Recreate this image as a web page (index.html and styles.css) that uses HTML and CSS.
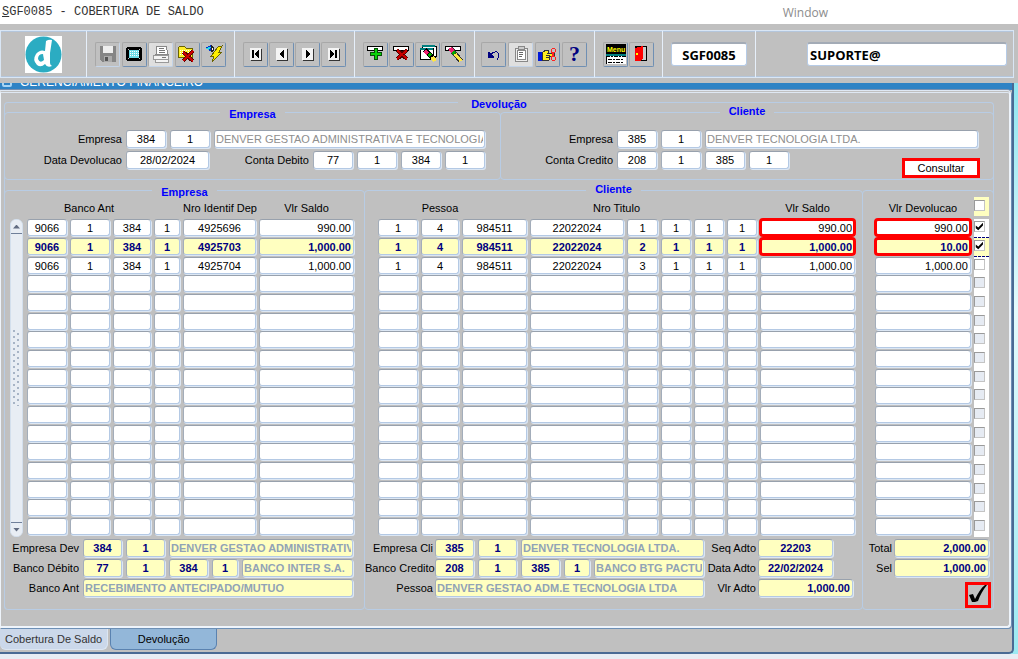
FILE: index.html
```html
<!DOCTYPE html>
<html lang="pt-BR">

<head>
  <meta charset="UTF-8">
  <meta name="viewport" content="width=device-width, initial-scale=1.0">
  <title>SGF0085 - Cobertura de Saldo</title>
  <link rel="stylesheet" href="styles.css">
</head>

<body>
  <header class="menubar">
    <span class="menu-title"><u>S</u>GF0085 - COBERTURA DE SALDO</span>
    <span class="menu-window">Window</span>
  </header>

  <div class="toolbar">
    <div class="tool-frame">
      <div class="group group-logo">
        <svg class="logo" viewBox="0 0 37 37" role="img" aria-label="Logo">
          <rect width="37" height="37" fill="#fff" />
          <circle cx="18.500" cy="18.500" r="18" fill="#2bacc2" />
          <path d="M21 5Q24 3 27 4L25 17V27Q25 29 27 30Q22 32 20 28Q16 32 12 29Q7 24 11 18Q15 13 20 15Z" fill="#fff" />
          <path d="M18 18Q13 18 13 23Q15 28 19 24Z" fill="#2bacc2" />
        </svg>
      </div>
      <div class="group group-file">
        <button class="tool off" aria-label="Salvar"><svg viewBox="0 0 20 20"><path d="M2 2h16v16H4l-2-2z" fill="#858585" /><path d="M5 2h10v7H5z" fill="#eee" /><path d="M6 12h8v6H6z" fill="#aaa" /><path d="M7 13h3v4H7z" fill="#555" /></svg></button>
        <button class="tool" aria-label="Tela"><svg viewBox="0 0 20 20"><path d="M3 3h14v1h1v12h-1v1H3v-1H2V4h1z" fill="#000" /><path d="M4 5h12v10H4z" fill="#c0c0c0" /><path d="M5 5h10v1h1v8h-1v1H5v-1H4V6h1z" fill="#000" /><path d="M5 6h10v8H5z" fill="#6fdde8" /><path d="M6 7.500h9M6 9.500h9M6 11.500h9" stroke="#fff" stroke-dasharray="1 1" /></svg></button>
        <button class="tool off light" aria-label="Imprimir"><svg viewBox="0 0 20 20"><path d="M1 1h18v18H1z" fill="#ddd" /><path d="M6 2h9l2 8H5z" fill="#fff" stroke="#888" /><path d="M8 4h5M8 6h6M8 8h6" stroke="#777" /><path d="M2 11h15v4H2zM4 15h13v3H4z" fill="#f4f4f4" stroke="#999" /><path d="M11 13h4" stroke="#777" /></svg></button>
        <button class="tool" aria-label="Fechar"><svg viewBox="0 0 20 20"><path d="M1 4l2-2h4l2 2h6v9H1z" fill="#ffee2b" stroke="#6a6300" /><path d="M3 6h11M3 8h11M3 10h5" stroke="#fff" stroke-dasharray="1 1" /><path d="M6 8l10 9M16 7L6 17" stroke="#500" stroke-width="4" /><path d="M6 8l10 9M16 7L6 17" stroke="#c00" stroke-width="2" /></svg></button>
        <button class="tool" aria-label="Executar consulta"><svg viewBox="0 0 20 20"><path d="M1 4l6-3 1 7z" fill="#0030d0" /><path d="M1 4l6-1-2 3z" fill="#28dbe5" /><path d="M7 1l3 4-2 3z" fill="#fff" stroke="#222" /><path d="M14 3l4-1-3 6h3L8 18l2-6H7z" fill="#ffee00" stroke="#6a6300" /></svg></button>
      </div>
      <div class="group group-nav">
        <button class="tool" aria-label="Primeiro"><svg viewBox="0 0 20 20"><path d="M5 5h11v12H5z" fill="#333" /><path d="M4 4h11v12H4z" fill="#f4f4f4" /><path d="M6 6h2v8H6zM13 6v8l-5-4z" fill="#000" /></svg></button>
        <button class="tool" aria-label="Anterior"><svg viewBox="0 0 20 20"><path d="M5 5h11v12H5z" fill="#333" /><path d="M4 4h11v12H4z" fill="#f4f4f4" /><path d="M12 6v8l-5-4z" fill="#000" /></svg></button>
        <button class="tool" aria-label="Próximo"><svg viewBox="0 0 20 20"><path d="M5 5h11v12H5z" fill="#333" /><path d="M4 4h11v12H4z" fill="#f4f4f4" /><path d="M8 6v8l5-4z" fill="#000" /></svg></button>
        <button class="tool" aria-label="Último"><svg viewBox="0 0 20 20"><path d="M5 5h11v12H5z" fill="#333" /><path d="M4 4h11v12H4z" fill="#f4f4f4" /><path d="M6 6v8l5-4zM11 6h2v8h-2z" fill="#000" /></svg></button>
      </div>
      <div class="group group-record">
        <button class="tool" aria-label="Inserir"><svg viewBox="0 0 20 20"><path d="M1 2h16v5H1z" fill="#000" /><path d="M2 3h14v3H2z" fill="#fff" /><path d="M8 4h4v4h4v4h-4v4H8v-4H4V8h4z" fill="#064d06" /><path d="M9 5h2v4h4v2h-4v4H9v-4H5V9h4z" fill="#0ad20a" /></svg></button>
        <button class="tool" aria-label="Excluir"><svg viewBox="0 0 20 20"><path d="M1 2h16v5H1z" fill="#000" /><path d="M2 3h14v3H2z" fill="#fff" /><path d="M5 6l10 9M15 6L5 15" stroke="#500" stroke-width="4" /><path d="M5 6l10 9M15 6L5 15" stroke="#c80000" stroke-width="2" /></svg></button>
        <button class="tool" aria-label="Limpar tela"><svg viewBox="0 0 20 20"><path d="M4 2h14v10H4z" fill="#fff" stroke="#000" /><path d="M2 4h13v11H2z" fill="#fff" stroke="#000" /><path d="M4 2h13M2 5h13" stroke="#007f7f" stroke-width="2" /><path d="M7 6l10 10" stroke="#000" stroke-width="5" /><path d="M7 7l3 3" stroke="#f02070" stroke-width="4" /><path d="M11 10l2 2" stroke="#0a0" stroke-width="4" /><path d="M14 13l3 4" stroke="#ffe840" stroke-width="4" /></svg></button>
        <button class="tool" aria-label="Limpar registro"><svg viewBox="0 0 20 20"><path d="M1 2h16v5H1z" fill="#000" /><path d="M2 3h14v3H2z" fill="#fff" /><path d="M6 4l11 13" stroke="#333" stroke-width="5" /><path d="M6 4l3 4" stroke="#f02070" stroke-width="4" /><path d="M9 8l2 2" stroke="#0a0" stroke-width="4" /><path d="M11 10l6 7" stroke="#ffe840" stroke-width="3" /></svg></button>
      </div>
      <div class="group group-edit">
        <button class="tool" aria-label="Desfazer"><svg viewBox="0 0 20 20"><path d="M4 8v6h6v-1L5 8z" fill="#000080" /><path d="M6 12Q9 7 13 8Q17 10 13 16" fill="none" stroke="#000080" /></svg></button>
        <button class="tool off light" aria-label="Lista"><svg viewBox="0 0 20 20"><path d="M4 4h12v13H4z" fill="#eee" stroke="#888" /><path d="M7 2h6v3H7z" fill="#ccc" stroke="#888" /><path d="M6 6h8v9H6z" fill="#fff" stroke="#888" /><path d="M8 8h4M8 10h4M8 12h3" stroke="#666" /></svg></button>
        <button class="tool" aria-label="Recortar"><svg viewBox="0 0 20 20"><path d="M0 8h4v9H0z" fill="#0018d8" /><path d="M4 9l4-3h3l-1 3h6v3h-4l-1 4H4z" fill="#ffee20" stroke="#333" /><path d="M8 11h4M8 13h4" stroke="#333" /><circle cx="15.500" cy="6.500" r="2" fill="none" stroke="#f22" /><circle cx="15.500" cy="14.500" r="2" fill="none" stroke="#f22" /><path d="M13 8l4 5M13 13l4-5" stroke="#f22" /></svg></button>
        <button class="tool help" aria-label="Ajuda">?</button>
      </div>
      <div class="group group-menu">
        <button class="tool" aria-label="Menu"><svg viewBox="0 0 20 20"><path d="M0 0h20v10H0z" fill="#000" /><text x="1" y="8" class="menu-glyph">Menu</text><path d="M0 10h20v2H0z" fill="#008080" /><path d="M0 12h20v8H0z" fill="#fff" /><path d="M0 12h20M2 15h16M2 18h16" stroke="#000" stroke-dasharray="4 1 2 1" /><path d="M.500 12v8" stroke="#000" /></svg></button>
        <button class="tool" aria-label="Sair"><svg viewBox="0 0 20 20"><path d="M3 2h12v15H3z" fill="#000" /><path d="M10 3h4v13h-4z" fill="#ccc" /><path d="M3 4l8-2v13l-3 2H3z" fill="#f00" /><path d="M4 9h2v2H4z" fill="#ff0" /></svg></button>
      </div>
      <div class="group group-code"><input class="info" aria-label="Programa" value="SGF0085" readonly></div>
      <div class="group group-user"><input class="info" aria-label="Usuário" value="SUPORTE@" readonly></div>
    </div>
  </div>

  <div class="desktop">
    <main class="window">
      <div class="window-title">
        <span class="window-icon"></span>
        <span>GERENCIAMENTO FINANCEIRO</span>
      </div>

      <div class="canvas">
        <fieldset class="panel outer">
          <legend>Devolução</legend>

          <div class="filters">
            <fieldset class="panel filter">
              <legend>Empresa</legend>
              <div class="line">
                <label class="lbl" for="emp">Empresa</label>
                <input class="fld w40" id="emp" value="384">
                <input class="fld w40" aria-label="Filial" value="1">
                <input class="fld name" aria-label="Nome da empresa" value="DENVER GESTAO ADMINISTRATIVA E TECNOLOGIA LTDA" disabled>
              </div>
              <div class="line">
                <label class="lbl" for="data">Data Devolucao</label>
                <input class="fld w83" id="data" value="28/02/2024">
                <label class="lbl grow" for="debito">Conta Debito</label>
                <input class="fld w40" id="debito" value="77">
                <input class="fld w40" aria-label="Conta debito 2" value="1">
                <input class="fld w40" aria-label="Conta debito 3" value="384">
                <input class="fld w40" aria-label="Conta debito 4" value="1">
              </div>
            </fieldset>
            <fieldset class="panel filter credit">
              <legend class="high">Cliente</legend>
              <div class="line">
                <label class="lbl" for="cli">Empresa</label>
                <input class="fld w40" id="cli" value="385">
                <input class="fld w40" aria-label="Filial cliente" value="1">
                <input class="fld name" aria-label="Nome do cliente" value="DENVER TECNOLOGIA LTDA." disabled>
              </div>
              <div class="line">
                <label class="lbl" for="credito">Conta Credito</label>
                <input class="fld w40" id="credito" value="208">
                <input class="fld w40" aria-label="Conta credito 2" value="1">
                <input class="fld w40" aria-label="Conta credito 3" value="385">
                <input class="fld w40" aria-label="Conta credito 4" value="1">
                <button class="query">Consultar</button>
              </div>
            </fieldset>
          </div>

          <div class="details">
            <fieldset class="panel detail empresa">
              <legend>Empresa</legend>
              <div class="grid-area">
                <div class="scroll">
                  <button class="arrow up" aria-label="Subir"></button>
                  <div class="track"><span class="grip"></span></div>
                  <button class="arrow down" aria-label="Descer"></button>
                </div>
                <table>
                  <colgroup>
                    <col class="c43"><col class="c43"><col class="c41"><col class="c29"><col class="c76"><col class="c98">
                  </colgroup>
                  <thead>
                    <tr><th colspan="3">Banco Ant</th><th></th><th>Nro Identif Dep</th><th>Vlr Saldo</th></tr>
                  </thead>
                  <tbody id="empresaRows"></tbody>
                </table>
              </div>
              <div class="totals">
                <div class="line">
                  <label class="lbl" for="empDev">Empresa Dev</label>
                  <input class="fld key w39" id="empDev" value="384">
                  <input class="fld key w39" aria-label="Filial dev" value="1">
                  <input class="fld key name" aria-label="Nome empresa dev" value="DENVER GESTAO ADMINISTRATIVA E TECNOLOGIA" disabled>
                </div>
                <div class="line">
                  <label class="lbl" for="bcoDeb">Banco Débito</label>
                  <input class="fld key w39" id="bcoDeb" value="77">
                  <input class="fld key w39" aria-label="Banco débito 2" value="1">
                  <input class="fld key w39" aria-label="Banco débito 3" value="384">
                  <input class="fld key w26" aria-label="Banco débito 4" value="1">
                  <input class="fld key name" aria-label="Nome banco débito" value="BANCO INTER S.A." disabled>
                </div>
                <div class="line">
                  <label class="lbl" for="bcoAnt">Banco Ant</label>
                  <input class="fld key name" id="bcoAnt" value="RECEBIMENTO ANTECIPADO/MUTUO" disabled>
                </div>
              </div>
            </fieldset>

            <fieldset class="panel detail cliente">
              <legend class="high">Cliente</legend>
              <div class="grid-area">
                <table>
                  <colgroup>
                    <col class="c43"><col class="c41"><col class="c68"><col class="c97"><col class="c34"><col class="c33"><col class="c33"><col class="c33"><col class="c98">
                  </colgroup>
                  <thead>
                    <tr><th></th><th>Pessoa</th><th></th><th colspan="3" class="titulo">Nro Titulo</th><th></th><th></th><th>Vlr Saldo</th></tr>
                  </thead>
                  <tbody id="clienteRows"></tbody>
                </table>
              </div>
              <div class="totals split">
                <div class="names">
                  <div class="line">
                    <label class="lbl" for="empCli">Empresa Cli</label>
                    <input class="fld key w39" id="empCli" value="385">
                    <input class="fld key w39" aria-label="Filial cli" value="1">
                    <input class="fld key name" aria-label="Nome empresa cli" value="DENVER TECNOLOGIA LTDA." disabled>
                  </div>
                  <div class="line">
                    <label class="lbl" for="bcoCre">Banco Credito</label>
                    <input class="fld key w39" id="bcoCre" value="208">
                    <input class="fld key w39" aria-label="Banco credito 2" value="1">
                    <input class="fld key w39" aria-label="Banco credito 3" value="385">
                    <input class="fld key w26" aria-label="Banco credito 4" value="1">
                    <input class="fld key name" aria-label="Nome banco credito" value="BANCO BTG PACTUAL" disabled>
                  </div>
                  <div class="line">
                    <label class="lbl" for="pessoa">Pessoa</label>
                    <input class="fld key name" id="pessoa" value="DENVER GESTAO ADM.E TECNOLOGIA LTDA" disabled>
                  </div>
                </div>
                <div class="adto">
                  <div class="line"><label class="lbl" for="seq">Seq Adto</label><input class="fld key w75" id="seq" value="22203"></div>
                  <div class="line"><label class="lbl" for="dtAdto">Data Adto</label><input class="fld key w75" id="dtAdto" value="22/02/2024"></div>
                  <div class="line"><label class="lbl" for="vlrAdto">Vlr Adto</label><input class="fld key w95 num" id="vlrAdto" value="1,000.00"></div>
                </div>
              </div>
            </fieldset>

            <section class="panel detail devolucao">
              <div class="grid-area">
                <table>
                  <colgroup>
                    <col class="c98"><col class="c15">
                  </colgroup>
                  <thead>
                    <tr><th>Vlr Devolucao</th><th class="pick all"><input type="checkbox" aria-label="Selecionar todos"></th></tr>
                  </thead>
                  <tbody id="devolucaoRows"></tbody>
                </table>
              </div>
              <div class="totals">
                <div class="line"><label class="lbl" for="total">Total</label><input class="fld key w95 num" id="total" value="2,000.00"></div>
                <div class="line"><label class="lbl" for="sel">Sel</label><input class="fld key w95 num" id="sel" value="1,000.00"></div>
                <button class="confirm" aria-label="Confirmar">
                  <svg viewBox="0 0 20 20"><path d="M1 10l4-1 2 5C10 8 13 3 17 0h2C15 5 12 10 10 16L7 17H4z" fill="#000" /></svg>
                </button>
              </div>
            </section>
          </div>
        </fieldset>
      </div>

      <nav class="tabs">
        <button class="tab">Cobertura De Saldo</button>
        <button class="tab active">Devolução</button>
      </nav>
    </main>
  </div>
  <footer class="status"></footer>

  <script>
    const ROW_COUNT = 17;
    const CURRENT = 1;

    const empresa = [
      ['9066', '1', '384', '1', '4925696', '990.00'],
      ['9066', '1', '384', '1', '4925703', '1,000.00'],
      ['9066', '1', '384', '1', '4925704', '1,000.00']
    ];
    const cliente = [
      ['1', '4', '984511', '22022024', '1', '1', '1', '1', '990.00'],
      ['1', '4', '984511', '22022024', '2', '1', '1', '1', '1,000.00'],
      ['1', '4', '984511', '22022024', '3', '1', '1', '1', '1,000.00']
    ];
    const devolucao = [['990.00'], ['10.00'], ['1,000.00']];

    function fillRows(id, data, columns, marked) {
      const body = document.getElementById(id);
      for (let i = 0; i < ROW_COUNT; i++) {
        const row = body.insertRow(-1);
        if (i === CURRENT) row.className = 'current';
        for (let j = 0; j < columns; j++) {
          const input = document.createElement('input');
          input.className = 'fld';
          input.setAttribute('aria-label', 'Linha ' + (i + 1) + ', coluna ' + (j + 1));
          if (j === columns - 1) {
            input.classList.add('num');
            if (marked && i < 2) input.classList.add('marked');
          }
          input.value = data[i] ? data[i][j] : '';
          row.insertCell(-1).appendChild(input);
        }
      }
    }

    fillRows('empresaRows', empresa, 6, false);
    fillRows('clienteRows', cliente, 9, true);
    fillRows('devolucaoRows', devolucao, 1, true);

    // selection box at the end of each devolucao row
    Array.from(document.getElementById('devolucaoRows').rows).forEach((row, i) => {
      const cell = row.insertCell(-1);
      const box = document.createElement('input');
      cell.className = i < 2 ? 'pick picked' : 'pick';
      box.type = 'checkbox';
      box.checked = i < 2;
      box.disabled = i >= devolucao.length;
      box.setAttribute('aria-label', 'Selecionar linha ' + (i + 1));
      cell.appendChild(box);
    });
  </script>
</body>

</html>
```
FILE: styles.css
```css
* {
  box-sizing: border-box;
}

body {
  margin: 0;
  background-color: #e8edf4;
  font-family: "Liberation Sans", Arial, sans-serif;
  font-size: 11px;
  color: #000;
}

input,
button {
  font-family: inherit;
  font-size: inherit;
  color: inherit;
}

.menubar {
  display: flex;
  justify-content: space-between;
  align-items: center;
  height: 24px;
  padding: 0 190px 0 2px;
  background-color: #fff;
}

.menu-title {
  font-family: "Liberation Mono", monospace;
  font-size: 12px;
  color: #333;
}

.menu-window {
  font-family: "Open Sans", sans-serif;
  font-size: 12px;
  color: #8c8c8c;
}

/* toolbar */
.toolbar {
  padding: 6px 4px 5px 0;
  background-color: #c0c0c0;
}

.tool-frame {
  display: flex;
  height: 48px;
  border: 1px solid #d9e6f5;
  box-shadow: inset 0 1px 0 #b4c6dc, inset 0 -1px 0 #b4c6dc;
}

.group {
  display: flex;
  justify-content: space-between;
  align-items: center;
  flex: none;
  padding: 0 8px;
  border-right: 1px solid #e6effa;
}

.group-logo {
  width: 86px;
  justify-content: center;
}

.group-file {
  width: 148px;
}

.group-nav,
.group-record,
.group-edit {
  width: 120px;
}

.group-edit {
  padding: 0 7px 0 6px;
}

.group-menu {
  width: 68px;
}

.group-code {
  width: 93px;
}

.group-user {
  flex: 1;
  padding: 0 6px 0 51px;
  border-right: none;
}

.logo {
  width: 37px;
  height: 37px;
}

.tool {
  width: 25px;
  height: 25px;
  padding: 0;
  border: 1px solid #a8a8a8;
  border-right-color: #6f8fb3;
  border-bottom-color: #6f8fb3;
  border-radius: 2px;
  background-color: #c0c0c0;
}

.tool.off {
  border-right-color: #c4d4e8;
  border-bottom-color: #c4d4e8;
}

.tool.light {
  background-color: #dfdfdf;
}

.tool svg {
  display: block;
  width: 20px;
  height: 20px;
  margin: 0 auto;
  shape-rendering: crispEdges;
}

.menu-glyph {
  font: bold 7px "Liberation Sans", sans-serif;
  fill: #ffff00;
}

.tool.help {
  font: bold 22px/22px "Liberation Serif", serif;
  color: #000080;
}

.info {
  width: 100%;
  height: 24px;
  padding: 0 0 0 2px;
  border: 1px solid #b6cbe6;
  border-top: 2px solid #a3abb6;
  border-radius: 3px;
  background-color: #fff;
  font-family: "Open Sans", sans-serif;
  font-size: 13px;
  font-weight: bold;
}

.group-code .info {
  padding: 0;
  text-align: center;
}

/* window */
.desktop {
  padding-right: 4px;
  background: linear-gradient(#8fe5f0, #e4fbfd 40%, #9be9f2);
}

.window {
  border-right: 2px solid #4a6a94;
  border-bottom: 2px solid #4a6a94;
  border-bottom-right-radius: 5px;
  background-color: #c0c0c0;
}

.window-title {
  display: flex;
  align-items: flex-end;
  gap: 8px;
  height: 7px;
  padding: 0 0 3px 2px;
  overflow: hidden;
  background-color: #2f83c5;
  color: #fff;
  font-size: 12px;
  line-height: 9px;
}

.window-icon {
  width: 10px;
  height: 10px;
  border: 2px solid #a8d4f4;
  border-radius: 2px;
}

.canvas {
  margin-right: 1px;
  padding: 4px 15px 16px 3px;
  border: 2px solid #eef4fb;
  border-left-width: 1px;
  border-top: 3px double #dfe8f3;
  border-top-right-radius: 4px;
  border-bottom-right-radius: 4px;
  box-shadow: 0 -1px 0 #7890b0, 1px 1px 0 #6d8fb5;
}

.panel {
  min-width: 0;
  margin: 0;
  padding: 0;
  border: 1px solid #b8cce4;
  border-radius: 4px;
}

legend {
  height: 10px;
  margin: 0 auto;
  padding: 0 9px;
  color: #0000ff;
  font-weight: bold;
  line-height: 14px;
}

legend.high {
  line-height: 8px;
}

.outer {
  border-bottom: none;
}

.outer > legend {
  padding: 0 13px;
}

.filters {
  display: grid;
  grid-template-columns: 497fr 493fr;
  margin: 0 -1px;
}

.filter {
  padding: 13px 0 10px;
}

.filter .line {
  padding-right: 15px;
}

.filter + .filter {
  margin-left: -1px;
}

.line {
  display: flex;
  align-items: center;
  gap: 4px;
}

.line + .line {
  margin-top: 3px;
}

.lbl {
  flex: none;
  text-align: right;
  white-space: nowrap;
}

.filter .lbl {
  width: 117px;
}

.credit .lbl {
  width: 112px;
}

.filter .lbl.grow {
  flex: 1;
  width: auto;
}

.fld {
  display: block;
  flex: none;
  height: 18px;
  min-width: 0;
  padding: 0 2px;
  border: 1px solid #b4c9e4;
  border-top-color: #98a1ad;
  border-left-color: #a3adba;
  border-radius: 3px;
  background-color: #fff;
  box-shadow: 1px 1px 0 #dce7f4;
  text-align: center;
}

.fld.name {
  flex: 1;
  padding: 0 1px;
  text-align: left;
}

.fld:disabled {
  color: #8e8e8e;
}

.fld.num {
  text-align: right;
}

.fld.key,
.current .fld {
  background-color: #ffffc0;
  color: #000080;
  font-weight: bold;
}

.fld.key:disabled {
  color: #91a3b6;
}

.w26 { width: 26px; }
.w39 { width: 39px; }
.w40 { width: 40px; }
.w75 { width: 75px; }
.w83 { width: 83px; }
.w95 { width: 95px; }

.query {
  width: 78px;
  height: 20px;
  margin: 7px -2px -9px auto;
  padding: 0;
  border: 3px solid #ff0000;
  background-color: #fff;
  line-height: 12px;
}

/* detail grids */
.details {
  display: grid;
  grid-template-columns: 361fr 498fr 131fr;
  margin: 5px -1px 0;
}

.detail {
  padding-bottom: 12px;
}

.empresa .grid-area {
  padding: 0 8px 0 5px;
}

.cliente {
  margin-left: -1px;
}

.cliente .grid-area {
  padding: 0 6px 0 13px;
}

.devolucao {
  margin: 5px 0 0 -1px;
  padding: 4px 4px 0 12px;
}

.grid-area {
  display: flex;
  align-items: flex-end;
  gap: 4px;
}

table {
  flex: 1;
  width: 100%;
  border-spacing: 0;
  table-layout: fixed;
}

.c15 { width: 15px; }
.c29 { width: 29px; }
.c33 { width: 33px; }
.c34 { width: 34px; }
.c41 { width: 41px; }
.c43 { width: 43px; }
.c68 { width: 68px; }
.c76 { width: 76px; }
.c97 { width: 97px; }
.c98 { width: 98px; }

th {
  height: 24px;
  padding: 2px 3px 0 0;
  font-weight: normal;
  white-space: nowrap;
}

th.titulo {
  padding-left: 12px;
}

td {
  height: 19px;
  padding: 0 3px 0 0;
  vertical-align: top;
}

tr:nth-child(3n) td {
  height: 18px;
}

td .fld {
  width: 100%;
  height: 17px;
}

.fld.marked {
  outline: 3px solid #ff0000;
  outline-offset: -2px;
}

.pick {
  padding: 2px 0 0;
  background-color: #fff;
  text-align: left;
}

.pick.all,
.current .pick {
  background-color: #ffffc0;
}

.pick.all {
  padding: 0 0 2px;
  border-top: 2px solid transparent;
  border-bottom: 3px solid transparent;
  background-clip: padding-box;
}

.pick.picked {
  border-bottom: 1px dashed #000080;
}

.pick input {
  display: block;
  appearance: none;
  width: 11px;
  height: 11px;
  margin: 0;
  border: 1px solid #c4c4c4;
  border-top-color: #9a9a9a;
  border-left-color: #9a9a9a;
  background-color: #fff;
}

.pick input:disabled {
  background-color: #e6ebf3;
}

.pick input:checked::before {
  content: "";
  display: block;
  height: 9px;
  background-color: #000;
  clip-path: polygon(10% 40%, 38% 62%, 90% 8%, 90% 38%, 38% 92%, 10% 70%);
}

.scroll {
  display: flex;
  flex-direction: column;
  flex: none;
  width: 13px;
  height: 318px;
  border: 1px solid #d3dfed;
  border-radius: 6px;
  background-color: #e8edf4;
  overflow: hidden;
}

.arrow {
  height: 14px;
  padding: 0;
  border: none;
  background-color: #e8edf4;
}

.arrow.up {
  border-bottom: 1px solid #6f7f9a;
}

.arrow.down {
  border-top: 1px solid #6f7f9a;
}

.arrow::before {
  content: "";
  display: block;
  width: 7px;
  height: 4px;
  margin: 0 auto;
  background-color: #626c82;
  clip-path: polygon(50% 0, 100% 100%, 0 100%);
}

.arrow.down::before {
  clip-path: polygon(0 0, 100% 0, 50% 100%);
}

.track {
  display: flex;
  flex: 1;
  align-items: center;
  justify-content: center;
  padding-bottom: 20px;
}

.grip {
  width: 8px;
  height: 76px;
  background-image: radial-gradient(circle at 1px 1px, #a7b4c6 1px, transparent 1px), radial-gradient(circle at 5px 4px, #a7b4c6 1px, transparent 1px);
  background-size: 8px 6px;
}

/* fields below the grids */
.totals {
  padding-top: 2px;
}

.totals .line + .line {
  margin-top: 2px;
}

.empresa .totals {
  padding: 2px 11px 0 5px;
}

.empresa .totals .lbl {
  width: 69px;
}

.split {
  display: flex;
  padding-right: 9px;
}

.names {
  flex: 1;
  min-width: 0;
}

.names .lbl {
  width: 68px;
}

.names .line .lbl {
  margin-right: -2px;
}

.adto {
  width: 149px;
}

.adto .lbl {
  width: 52px;
  margin-right: -2px;
}

.devolucao .line {
  justify-content: flex-end;
  gap: 2px;
}

.confirm {
  display: block;
  width: 26px;
  height: 26px;
  margin: 5px -2px 0 auto;
  padding: 0;
  border: 3px solid #ff0000;
  background-color: #c0c0c0;
}

.confirm svg {
  display: block;
  width: 20px;
  height: 20px;
}

/* page tabs */
.tabs {
  display: flex;
  align-items: flex-start;
  gap: 2px;
  height: 24px;
  padding-top: 1px;
}

.tab {
  height: 21px;
  padding: 0 5px;
  border: 1px solid #dce6f2;
  border-top: none;
  border-left: none;
  border-radius: 0 0 6px 6px;
  background-color: #cbd8ea;
  color: #333;
}

.tab.active {
  width: 107px;
  border: 1px solid #5a82b0;
  border-top: none;
  background-color: #93b7d9;
  color: #000;
}

.status {
  height: 6px;
}
```
